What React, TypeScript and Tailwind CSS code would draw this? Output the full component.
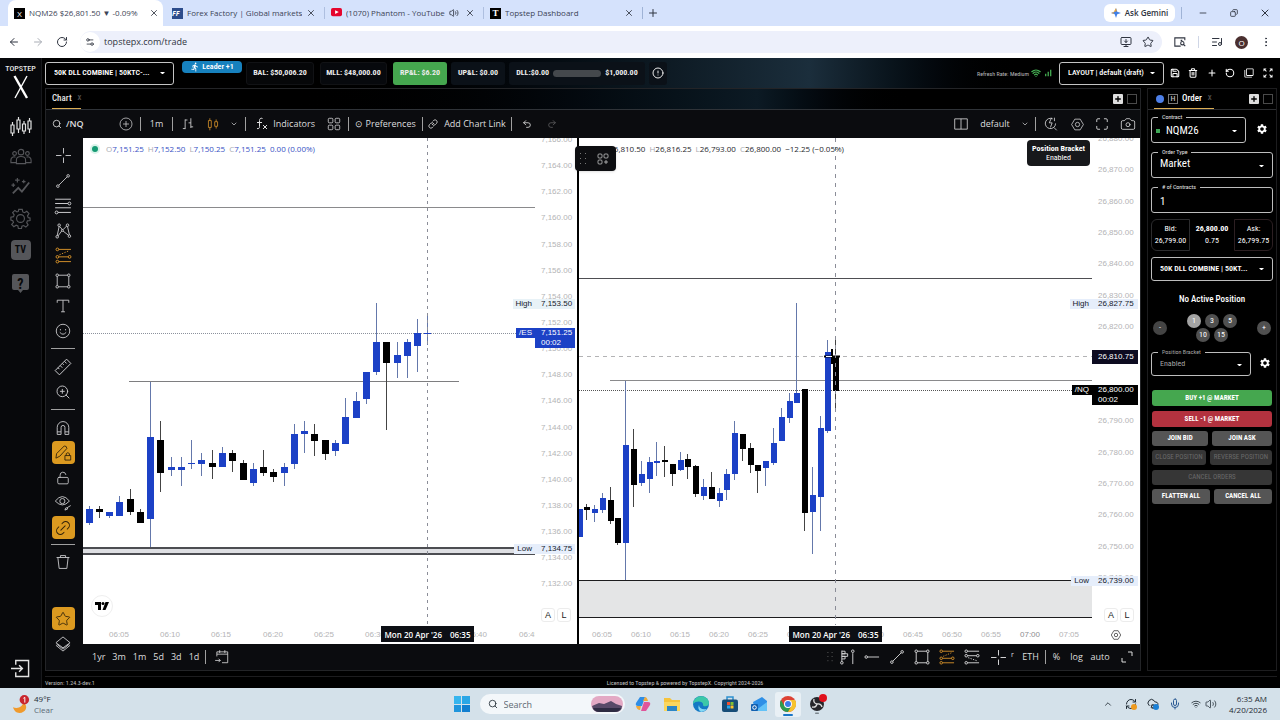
import React, { useState } from 'react';
import {
  ArrowLeft, ArrowRight, RotateCw, X, Plus, Minus, Copy, Volume2, Star, Search, ChevronDown, ChevronUp,
  Maximize, Camera, Undo2, Redo2, ZoomIn, LockOpen, Link2, Link,
  Settings2, MoreVertical, ListMusic, MonitorDown, Wifi, Save, RotateCcw, Mic,
  RefreshCw, CloudCog, CircleAlert, Trash2,
} from 'lucide-react';
import { MdSettings, MdZoomOutMap, MdOutlineFilterNone, MdDirectionsRun, MdSignalCellularAlt } from 'react-icons/md';

type IconProps = { className?: string };

// x step is constant, so a candle only holds wick top, body top, body bottom, wick bottom and direction
type Candle = [number, number, number, number, 0 | 1];

const esCandles: Candle[] = [
  [368, 371, 385, 387, 1], [368, 371, 374, 380, 0], [374, 374, 378, 380, 1], [358, 364, 378, 378, 1],
  [351, 361, 374, 377, 0], [371, 374, 385, 385, 0], [244, 299, 381, 409, 1], [283, 302, 335, 354, 0],
  [319, 329, 332, 338, 1], [319, 329, 332, 348, 1], [302, 325, 326, 331, 1], [315, 322, 326, 338, 1],
  [312, 325, 329, 341, 0], [309, 315, 329, 329, 1], [312, 315, 323, 334, 0], [322, 325, 342, 342, 0],
  [325, 331, 345, 348, 1], [312, 329, 335, 338, 0], [331, 334, 339, 344, 0], [325, 329, 335, 348, 1],
  [286, 296, 326, 331, 1], [283, 293, 296, 315, 1], [286, 296, 303, 318, 0], [302, 302, 316, 322, 0],
  [302, 305, 313, 318, 1], [260, 279, 306, 306, 1], [254, 263, 280, 280, 1], [234, 234, 261, 266, 1],
  [165, 204, 234, 237, 1], [204, 204, 225, 292, 0], [204, 217, 225, 240, 1], [201, 204, 218, 240, 1],
  [181, 195, 208, 234, 1], [178, 195, 196, 207, 1],
];

const nqCandles: Candle[] = [
  [371, 371, 399, 399, 1], [366, 369, 372, 382, 0], [367, 371, 375, 384, 1], [355, 360, 372, 375, 1],
  [349, 362, 383, 386, 0], [380, 380, 405, 407, 0], [243, 307, 405, 442, 1], [291, 311, 347, 369, 0],
  [323, 336, 345, 348, 1], [319, 324, 341, 355, 1], [304, 323, 325, 338, 1], [308, 322, 324, 339, 0],
  [326, 326, 336, 348, 0], [314, 322, 332, 333, 1], [316, 321, 329, 341, 0], [327, 328, 356, 359, 0],
  [341, 349, 358, 362, 1], [334, 349, 361, 361, 0], [350, 355, 363, 369, 1], [331, 336, 352, 362, 1],
  [283, 295, 336, 342, 1], [296, 296, 311, 323, 0], [305, 310, 327, 335, 0], [327, 327, 333, 355, 0],
  [323, 323, 330, 348, 1], [290, 305, 325, 327, 1], [270, 279, 303, 303, 1], [255, 263, 280, 285, 1],
  [165, 255, 265, 265, 1], [251, 251, 375, 393, 0], [329, 357, 374, 416, 1], [278, 290, 359, 393, 1],
  [202, 214, 293, 295, 1], [202, 218, 253, 272, 0],
];

const fmt = (n: number) => n.toLocaleString('en-US', { minimumFractionDigits: 2 });

const Candles = ({ data, x0, step, width }: { data: Candle[]; x0: number; step: number; width: number }) => (
  <>
    {data.map(([hi, top, bottom, lo, up], i) => {
      const x = Math.round(x0 + i * step);
      return (
        <g key={i} shapeRendering="crispEdges">
          <line x1={x + 0.5} x2={x + 0.5} y1={hi} y2={lo} stroke={up ? '#6478ab' : '#444'} />
          <rect x={x + 0.5 - width / 2} y={top} width={width} height={bottom - top} fill={up ? '#1c41c6' : '#000'} />
        </g>
      );
    })}
  </>
);

const Svg = ({ className = 'size-5', children }: { className?: string; children: React.ReactNode }) => (
  <svg viewBox="0 0 28 28" fill="none" stroke="currentColor" strokeWidth="1.4" className={className}>{children}</svg>
);

const TrendIcon = ({ className }: IconProps) => (
  <Svg className={className}><path d="M7.5 20.5 20.5 7.5" /><circle cx="6" cy="22" r="2" /><circle cx="22" cy="6" r="2" /></Svg>
);
const RectIcon = ({ className }: IconProps) => (
  <Svg className={className}>
    <path d="M7 5h14M7 23h14M5 7v14M23 7v14" />
    <circle cx="5" cy="5" r="2" /><circle cx="23" cy="5" r="2" /><circle cx="5" cy="23" r="2" /><circle cx="23" cy="23" r="2" />
  </Svg>
);
const CrossIcon = ({ className }: IconProps) => (
  <Svg className={className}><path d="M14 3v8M14 17v8M3 14h8M17 14h8" /></Svg>
);
const FibIcon = ({ className }: IconProps) => (
  <Svg className={className}>
    <path d="M3 4.500h22M3 10.500h18M3 16.500h22M7 23h18" /><circle cx="23" cy="10.500" r="2" /><circle cx="5" cy="23" r="2" />
  </Svg>
);
const PositionIcon = ({ className }: IconProps) => (
  <Svg className={className}>
    <path d="M7 5h18M7 16h14M7 23h18" /><circle cx="5" cy="5" r="2" /><circle cx="5" cy="16" r="2" /><circle cx="5" cy="23" r="2" />
    <circle cx="23" cy="16" r="2" /><path d="m8 13 14-6" strokeDasharray="2 2" />
  </Svg>
);
const ShortPositionIcon = ({ className }: IconProps) => (
  <Svg className={className}>
    <path d="M7 5h18M7 12h14M7 23h18" /><circle cx="5" cy="5" r="2" /><circle cx="5" cy="12" r="2" /><circle cx="5" cy="23" r="2" />
    <circle cx="23" cy="12" r="2" /><path d="m8 15 14 5" strokeDasharray="2 2" />
  </Svg>
);
const PatternIcon = ({ className }: IconProps) => (
  <Svg className={className}>
    <path d="M5 21 8 7M9 7l4 5M14 12l6-6M21 7l3 13M14 14l9 7M12 14l-6 8" /><circle cx="5" cy="23" r="2" /><circle cx="8" cy="5" r="2" />
    <circle cx="21" cy="5" r="2" /><circle cx="24" cy="22" r="2" /><circle cx="13" cy="13" r="1.500" />
  </Svg>
);
const HLineIcon = ({ className }: IconProps) => (
  <Svg className={className}><circle cx="5" cy="14" r="2" /><path d="M7 14h18" /></Svg>
);
const ProfileIcon = ({ className }: IconProps) => (
  <Svg className={className}>
    <path d="M6 4v17M6 5h5v4H6M6 9h9v4H6M6 13h5v4H6M23 8v17" /><circle cx="6" cy="23" r="2" /><circle cx="23" cy="5" r="2" />
  </Svg>
);
const CandleIcon = ({ className }: IconProps) => (
  <Svg className={className}><path d="M6 8h5v12H6zM8.500 4v4M8.500 20v5M17 10h5v8h-5zM19.500 6v4M19.500 18v4" /></Svg>
);
const BarsIcon = ({ className }: IconProps) => (
  <Svg className={className}><path d="M9 6v17M5 22h4M9 7h4M19 4v17M15 12h4M19 19h4" /></Svg>
);
const GridIcon = ({ className, plus }: IconProps & { plus?: boolean }) => (
  <Svg className={className}>
    <rect x="4" y="4" width="8" height="8" rx="2" /><rect x="16" y="4" width="8" height="8" rx="2" /><rect x="4" y="16" width="8" height="8" rx="2" />
    {plus ? <path d="M20 16v8M16 20h8" /> : <rect x="16" y="16" width="8" height="8" rx="2" />}
  </Svg>
);
const DotsIcon = ({ className }: IconProps) => (
  <svg viewBox="0 0 8 12" fill="currentColor" className={className}>
    {[1, 6, 11].map((y) => <g key={y}><rect x="1" y={y - 1} width="1" height="1" /><rect x="6" y={y - 1} width="1" height="1" /></g>)}
  </svg>
);
const HexIcon = ({ className }: IconProps) => (
  <Svg className={className}><path d="M9 4h10l6 10-6 10H9L3 14z" /><circle cx="14" cy="14" r="4" /></Svg>
);
const Sep = () => <span className="h-3.5 w-px shrink-0 bg-[#a0a0a0]" />;

const Tab = ({ icon, title, active, sound, last }: { icon: React.ReactNode; title: string; active?: boolean; sound?: boolean; last?: boolean }) => (
  <div className={`flex shrink-0 items-center ${active ? 'mr-[3px] w-[155px] rounded-t-lg bg-white' : 'w-[159px]'}`}>
    <span className="ml-1.5 flex size-[11px] shrink-0 items-center justify-center">{icon}</span>
    <span className="ml-1 flex-1 overflow-hidden whitespace-nowrap text-[8px] text-[#3c4356]">{title}</span>
    {sound && <Volume2 className="mr-0.5 size-2.5 shrink-0" />}
    <button aria-label="Close tab"><X className="mx-1 size-2.5" /></button>
    {!active && <span className={`ml-1 h-3 w-px ${last ? 'bg-[#9fb3d6]' : 'bg-[#aebfe0]'}`} />}
  </div>
);

const BrowserChrome = () => (
  <header className="font-['Open_Sans',sans-serif] text-[#2f3440]">
    <div className="flex h-[26px] bg-[#d5e2fc] pl-2">
      <Tab active title="NQM26 $26,801.50 ▼ -0.09%" icon={<span className="size-[11px] bg-black text-center text-[8px] leading-[11px] text-white">X</span>} />
      <Tab title="Forex Factory | Global markets f" icon={<span className="size-[11px] bg-[#2c4c8c] text-[7px] leading-[11px] font-bold text-white italic">FF</span>} />
      <Tab sound title="(1070) Phantom - YouTube" icon={<svg viewBox="0 0 12 10" className="w-[11px]"><rect width="12" height="9" rx="2" fill="#e5052d" /><path d="M4.500 2.500v4l4-2z" fill="#fff" /></svg>} />
      <Tab last title="Topstep Dashboard" icon={<span className="size-[11px] bg-black text-center font-['Liberation_Serif',serif] text-[9px] leading-[11px] font-bold text-white">T</span>} />
      <button aria-label="New tab" className="ml-1"><Plus className="size-3" /></button>
      <div className="ml-auto flex items-center">
        <button className="flex h-[18px] w-[71px] items-center justify-center gap-1 rounded-md bg-white text-[8px] font-semibold whitespace-nowrap">
          <svg viewBox="0 0 12 12" className="size-2.5"><path d="M6 0 7.500 4.500 12 6 7.500 7.500 6 12 4.500 7.500 0 6l4.500-1.500z" fill="#3f7fe8" /><path d="M6 0 7 4 4.500 4.500 0 6l4 1-1-2z" fill="#e7a23b" /></svg>
          Ask Gemini
        </button>
        <span className="mx-1.5 h-3 w-px bg-[#9fb3d6]" />
        <button aria-label="Minimize" className="flex w-[30px] justify-center"><Minus className="size-2.5" /></button>
        <button aria-label="Restore" className="flex w-8 justify-center"><Copy className="size-2 -scale-x-100" strokeWidth={2.5} /></button>
        <button aria-label="Close window" className="flex w-[30px] justify-center"><X className="size-3" /></button>
      </div>
    </div>
    <div className="flex h-8 items-center bg-white pr-2">
      <button aria-label="Back" className="flex w-7 justify-center"><ArrowLeft className="size-3" /></button>
      <button aria-label="Forward" className="flex w-5 justify-center text-[#a9adb5]"><ArrowRight className="size-3" /></button>
      <button aria-label="Reload" className="flex w-7 justify-center"><RotateCw className="size-3" /></button>
      <div className="ml-1 flex h-[22px] flex-1 items-center rounded-full bg-[#edf0fb] pr-2">
        <span className="flex size-5 items-center justify-center rounded-full bg-white"><Settings2 className="size-2.5" /></span>
        <input aria-label="Address" defaultValue="topstepx.com/trade" className="ml-1 flex-1 bg-transparent text-[9px] outline-none" />
        <MonitorDown className="mr-2.5 size-3" />
        <Star className="size-3" />
      </div>
      <button aria-label="Side panel" className="flex w-9 justify-center">
        <svg viewBox="0 0 14 12" fill="none" stroke="currentColor" strokeWidth="1.300" className="h-2.5"><path d="M8 11H1V1h12v3M8 4h2" /><circle cx="10" cy="7.500" r="2" /><path d="m11.500 9 2 2" /></svg>
      </button>
      <span className="h-3 w-px bg-[#cfd6e6]" />
      <button aria-label="Media" className="flex w-9 justify-center"><ListMusic className="size-3" /></button>
      <span className="size-[13px] rounded-full bg-[#4a2f2f] text-center text-[8px] leading-[13px] text-white">O</span>
      <button aria-label="Menu" className="ml-3"><MoreVertical className="size-3" /></button>
    </div>
  </header>
);

const Sidebar = () => (
  <nav className="flex w-[42px] shrink-0 flex-col items-center border-r border-[#18191c] bg-[#07080b] text-[#55565a]">
    <div className="mt-1.5 text-[8px] leading-[10px] font-medium text-[#e6e6e6]">TOPSTEP</div>
    <svg viewBox="0 0 16 24" className="mt-px mb-2.5 h-6 w-4" fill="none" stroke="#fff"><path d="M1.500 1 14 23" strokeWidth="2.400" /><path d="M14 1 2 23" strokeWidth="1.400" /></svg>
    <button aria-label="Trade" className="h-[33px] text-[#e2e2e2]">
      <svg viewBox="0 0 22 20" fill="none" stroke="currentColor" className="w-[22px]" strokeWidth="1.200">
        <path d="M1 9h3v8H1zM2.500 6v3M2.500 17v3M7 4h3v9H7zM8.500 1v3M8.500 13v4M12.500 8h3v7h-3zM14 5v3M14 15v3M18 5h3v8h-3zM19.500 2v3M19.500 13v4" />
      </svg>
    </button>
    <button aria-label="Leaders" className="h-[29px]">
      <svg viewBox="0 0 24 18" fill="none" stroke="currentColor" className="w-[22px]" strokeWidth="1.200">
        <circle cx="12" cy="4.500" r="3" /><circle cx="5" cy="6" r="2" /><circle cx="19" cy="6" r="2" />
        <path d="M7 17v-4c0-5 10-5 10 0v4zM7 16H1v-3c0-3 3-4 5-3M17 16h6v-3c0-3-3-4-5-3" />
      </svg>
    </button>
    <button aria-label="Insights" className="h-[31px]">
      <svg viewBox="0 0 22 20" className="w-5" fill="none" stroke="currentColor" strokeWidth="2">
        <path d="m2 18 6-6 4 4 8-10" /><path d="M7 1v5M4.500 3.500h5M14 3v4M12 5h4M2.500 7v4M.500 9h4" strokeWidth="1.300" />
      </svg>
    </button>
    <button aria-label="Settings" className="h-[33px]">
      <svg viewBox="0 0 24 24" fill="none" stroke="currentColor" className="w-[21px]" strokeWidth="1.300">
        <circle cx="12" cy="12" r="4.500" />
        <path d="M10 1.500h4l.600 3 2 .900 2.600-1.700 2.500 2.600L20 9l.900 2 2 .300v3l-3 .400-.800 2 1.600 2.600-2.600 2.500-2.500-1.700-2 .800-.500 2.600h-3.500l-.600-3-2-.800-2.600 1.700-2.500-2.600L4 16.500l-.800-2-2.200-.600V10.500l3-.600.800-2L3 5.300l2.600-2.500L8 4.500l1.500-.600z" />
      </svg>
    </button>
    <button aria-label="TradingView" className="mt-[5px] mb-3.5 size-5 rounded bg-current"><span className="block text-[10px] leading-5 font-bold text-[#08090b]">TV</span></button>
    <button aria-label="Help" className="relative h-[19px] w-[17px]">
      <svg viewBox="0 0 17 19" className="absolute inset-0" fill="currentColor"><path d="M2 0h13q2 0 2 2v12q0 2-2 2h-4l-2.500 3L6 16H2q-2 0-2-2V2q0-2 2-2z" /></svg>
      <span className="relative block text-[14px] leading-4 font-bold text-[#08090b]">?</span>
    </button>
    <button aria-label="Log out" className="mt-auto mb-2.5 text-[#e2e2e2]">
      <svg viewBox="0 0 20 20" className="size-[19px]" fill="none" stroke="currentColor" strokeWidth="1.500"><path d="M5 6V1.500h13.500v17H5V14M0 10h12M8.500 6.500 12 10l-3.500 3.500" /></svg>
    </button>
  </nav>
);

const Select = ({ id, label, value, className }: { id: string; label: string; value: string; className: string }) => (
  <div className="relative w-full">
    <select id={id} aria-label={label} className={`block w-full appearance-none truncate bg-transparent outline-none ${className}`}>
      <option>{value}</option>
    </select>
    <span className="pointer-events-none absolute inset-y-0 right-2 flex items-center">
      <svg viewBox="0 0 6 3" className="w-[5px]" fill="#fff"><path d="M0 0h6L3 3z" /></svg>
    </span>
  </div>
);

const Stat = ({ children, className }: { children: React.ReactNode; className: string }) => (
  <div className={`flex h-[23px] items-center justify-center rounded-[3px] text-[8px] font-bold whitespace-nowrap text-[#ececec] ${className}`}>{children}</div>
);

const TopBar = () => (
  <div className="flex h-[30px] items-center bg-linear-to-r from-black from-20% via-[#1b2e3c] via-62% to-black to-80% pl-[3px]">
    <div className="w-[129px] rounded-[3px] border border-[#c4c4c4] bg-black">
      <Select id="account-top" label="Account" value="50K DLL COMBINE | 50KTC-..." className="h-[21px] pl-2 text-[8px] font-semibold text-white" />
    </div>
    <div className="mt-[3px] ml-2 flex h-3 w-[60px] items-center justify-center gap-0.5 self-start rounded-[4px] bg-[#1781be] text-[8px] font-semibold text-white"><MdDirectionsRun className="size-2.5" />Leader +1</div>
    <Stat className="ml-1 w-[68px] border border-[#111215] bg-[#060709]">BAL: $50,006.20</Stat>
    <Stat className="ml-1.5 w-[67px] border border-[#111215] bg-[#07090d]">MLL: $48,000.00</Stat>
    <Stat className="ml-1.5 w-[54px] bg-[#45a74f]">RP&amp;L: $6.20</Stat>
    <Stat className="ml-1 w-[54px] bg-[#0b1118]">UP&amp;L: $0.00</Stat>
    <Stat className="ml-1 w-[136px] gap-1 bg-[#0b1118]">DLL:$0.00<span className="h-[7px] w-12 rounded-full bg-[#44484c]" />$1,000.00</Stat>
    <Stat className="ml-1 w-[18px] bg-[#0b1118]"><CircleAlert className="size-3" /></Stat>
    <div className="ml-auto flex items-center pr-1.5 text-white">
      <span className="text-[6px] text-[#bbb]">Refresh Rate: Medium</span>
      <Wifi className="ml-0.5 size-2.5 text-[#47b455]" strokeWidth={3} />
      <MdSignalCellularAlt className="ml-0.5 size-2.5 text-[#47b455]" />
      <div className="ml-1.5 w-[105px] rounded-[3px] border border-[#c4c4c4]">
        <Select id="layout" label="Layout" value="LAYOUT | default (draft)" className="h-[21px] pl-2 text-[8px] font-medium" />
      </div>
      <div className="flex w-[110px] justify-between pl-1.5">
        <button aria-label="Save"><Save className="size-2.5" strokeWidth={2.5} /></button>
        <button aria-label="Delete"><Trash2 className="size-2.5" strokeWidth={2.5} /></button>
        <button aria-label="Add"><Plus className="size-2.5" strokeWidth={2.5} /></button>
        <button aria-label="Reset"><RotateCcw className="size-2.5" strokeWidth={2.5} /></button>
        <button aria-label="Windows"><MdOutlineFilterNone className="size-2.5" /></button>
        <button aria-label="Expand"><MdZoomOutMap className="size-3" /></button>
      </div>
    </div>
  </div>
);

const PanelButtons = () => (
  <div className="ml-auto flex items-center gap-1 pr-[3px]">
    <button aria-label="Add tab" className="flex size-2.5 items-center justify-center rounded-[1px] bg-[#dedede] text-black"><Plus className="size-2" strokeWidth={4} /></button>
    <button aria-label="Maximize panel" className="size-2.5 border border-[#4a4a4a]" />
  </div>
);

const ChartToolbar = () => (
  <div className="flex h-7 items-center bg-[#0b0c0f] font-['Open_Sans',sans-serif] text-[9px] font-medium text-[#dededf]">
    <button className="flex w-[66px] items-center gap-1 pl-1.5 font-semibold"><Search className="size-2.5" />/NQ</button>
    <button aria-label="Compare" className="flex w-7 justify-center"><Svg className="size-[14px]"><circle cx="14" cy="14" r="12" /><path d="M14 8v12M8 14h12" /></Svg></button>
    <Sep />
    <button className="w-[31px]">1m</button>
    <Sep />
    <button aria-label="Bars" className="flex w-[30px] justify-center"><BarsIcon className="size-4" /></button>
    <button aria-label="Candles" className="flex w-5 justify-center text-[#d8932a]"><CandleIcon className="size-4" /></button>
    <button aria-label="Chart types" className="flex w-[22px] justify-center"><ChevronDown className="size-2" /></button>
    <Sep />
    <button className="flex w-[69px] items-center justify-end gap-1">
      <Svg className="size-3.5"><path d="M15 3c-4-2-6 1-6 4v12c0 4-2 5-5 4M4 11h10M16 16l8 8M24 16l-8 8" strokeWidth="2" /></Svg>Indicators
    </button>
    <button aria-label="Templates" className="flex w-[33px] justify-center pl-1"><GridIcon className="size-4" /></button>
    <Sep />
    <button className="w-[73px] whitespace-nowrap">⊙ Preferences</button>
    <Sep />
    <button className="flex w-[88px] items-center justify-center gap-1.5 whitespace-nowrap"><Link className="size-2.5" />Add Chart Link</button>
    <Sep />
    <button aria-label="Undo" className="flex w-[29px] justify-center"><Undo2 className="size-2.5" /></button>
    <button aria-label="Redo" className="flex w-[22px] justify-center text-[#5a5a5d]"><Redo2 className="size-2.5" /></button>
    <div className="ml-auto flex items-center">
      <button aria-label="Split layout" className="flex w-7 justify-center"><Svg className="size-4"><path d="M3 5h22v18H3zM14 5v18" /></Svg></button>
      <button className="w-10">default</button>
      <button aria-label="Layouts" className="flex w-5 justify-center"><ChevronDown className="size-2" /></button>
      <Sep />
      <button aria-label="Replay" className="flex w-[29px] justify-center"><Svg className="size-4"><path d="M17 5A9 9 0 1 0 22 13M19 20l5 5M15 3l-4 9h5l-3 8M20 3v6" /></Svg></button>
      <button aria-label="Settings" className="flex w-6 justify-center"><HexIcon className="size-[15px]" /></button>
      <button aria-label="Fullscreen" className="flex w-[26px] justify-center"><Maximize className="size-3.5" strokeWidth={1.5} /></button>
      <button aria-label="Snapshot" className="flex w-[25px] justify-center"><Camera className="size-4" strokeWidth={1.2} /></button>
    </div>
  </div>
);

const Tool = ({ label, children, on }: { label: string; children: React.ReactNode; on?: boolean }) => (
  <button aria-label={label} className={`my-px flex h-[23px] w-[23px] items-center justify-center rounded-[4px] ${on ? 'bg-[#dc9a20] text-[#33240a]' : ''}`}>{children}</button>
);

const DrawingTools = () => (
  <div className="flex w-[37px] shrink-0 flex-col items-center bg-[#0b0c0f] pt-[5px] pr-[3px] pb-3.5 text-[#c9c9cc]">
    <Tool label="Cross"><CrossIcon className="size-[19px]" /></Tool>
    <Tool label="Trend line"><TrendIcon className="size-[18px]" /></Tool>
    <Tool label="Fibonacci"><FibIcon className="size-5" /></Tool>
    <Tool label="Patterns"><PatternIcon className="size-[18px]" /></Tool>
    <Tool label="Positions"><span className="text-[#d8932a]"><PositionIcon className="size-[19px]" /></span></Tool>
    <Tool label="Shapes"><RectIcon className="size-[18px]" /></Tool>
    <Tool label="Text"><Svg className="size-[18px]"><path d="M5 9V5h18v4M14 5v18M11 23h6" /></Svg></Tool>
    <Tool label="Emoji">
      <Svg className="size-[18px]"><circle cx="14" cy="14" r="10.500" /><path d="M10 11v2M18 11v2M9 16q5 6 10 0" /></Svg>
    </Tool>
    <span className="my-[5px] h-px w-6 shrink-0 bg-[#a0a0a0]" />
    <Tool label="Measure">
      <Svg className="size-5"><path d="M3 19 19 3l6 6L9 25zM7 15l2 2M10 12l3 3M13 9l2 2M16 6l3 3" /></Svg>
    </Tool>
    <Tool label="Zoom in"><ZoomIn className="size-4" strokeWidth={1.4} /></Tool>
    <span className="my-[5px] h-px w-6 shrink-0 bg-[#a0a0a0]" />
    <Tool label="Magnet">
      <Svg className="size-[18px]"><path d="M5 24V13a9 9 0 0 1 18 0v11h-6V13a3 3 0 0 0-6 0v11zM5 20h6M17 20h6" /></Svg>
    </Tool>
    <Tool label="Stay in drawing mode" on>
      <Svg className="size-[18px]"><path d="m3 22 1-7L16 3q4 0 4 4L9 19zM17 18h9v7h-9zM19 18v-3q2.500-3 5 0v3" /></Svg>
    </Tool>
    <Tool label="Lock"><LockOpen className="size-3.5" strokeWidth={1.5} /></Tool>
    <Tool label="Hide">
      <Svg className="size-[18px]"><path d="M2 11q11-14 22 0-11 12-22 0z" /><circle cx="13" cy="11" r="4" /><path d="M17 25q0-4 4-4 2 3-4 4zM21 21l5-3" /></Svg>
    </Tool>
    <Tool label="Sync drawings" on><Link2 className="size-[18px] -rotate-45" strokeWidth={1.3} /></Tool>
    <span className="my-1 h-px w-6 shrink-0 bg-[#a0a0a0]" />
    <Tool label="Remove"><Svg className="size-[18px]"><path d="M4 7h20M10 7V4h8v3M6 7l2 17h12l2-17" /></Svg></Tool>
    <div className="mt-auto flex flex-col">
      <Tool label="Favorites" on><Star className="size-4" strokeWidth={1.3} /></Tool>
      <Tool label="Object tree">
        <Svg className="size-[18px]"><path d="M14 3 25 12 14 20 3 12zM3 16l11 9 11-9M4 14l10 8 10-8" /></Svg>
      </Tool>
    </div>
  </div>
);

type Tag = { y: number; name?: string; value: string; time?: string; className: string };

// a label that sits right under a tag is left out
const Axis = ({ prices, first, step, tags, gear, className }: { prices: number[]; first: number; step: number; tags: Tag[]; gear?: boolean; className: string }) => (
  <div className={`relative shrink-0 text-[8px] leading-[10px] ${className}`}>
    {prices.map((p, i) => {
      const y = Math.round(first + i * step);
      if (tags.some((t) => Math.abs(t.y - y) < 3)) return null;
      return <span key={p} className="absolute left-1.5 text-[#b4b4b6]" style={{ top: y - 5 }}>{fmt(p)}</span>;
    })}
    {tags.map((t) => (
      <div key={t.value} className="absolute right-0.5 left-0" style={{ top: t.y - 5 }}>
        {t.name && <span className={`absolute right-full px-[3px] ${t.className}`}>{t.name}</span>}
        <div className={`pl-1.5 ${t.className}`}>{t.value}{t.time && <div>{t.time}</div>}</div>
      </div>
    ))}
    <div className="absolute right-1.5 bottom-[22px] flex gap-0.5 text-[9px] font-medium text-[#222]">
      <button className="size-3.5 rounded-[3px] border border-[#ececec] bg-white">A</button>
      <button className="size-3.5 rounded-[3px] border border-[#ececec] bg-white">L</button>
    </div>
    {gear && <span className="absolute right-[18px] bottom-[3px] text-black"><HexIcon className="size-3" /></span>}
  </div>
);

const TimeAxis = ({ from, count, x0, step, cursor }: { from: number; count: number; x0: number; step: number; cursor: number }) => {
  const labels = Array.from({ length: count }, (_, i) => from + i * 5);
  const text = (m: number) => `${String(Math.floor(m / 60)).padStart(2, '0')}:${String(m % 60).padStart(2, '0')}`;
  return (
    <div className="absolute inset-x-0 bottom-0 h-[19px] overflow-hidden text-[8px] leading-[19px] text-[#b4b4b6]">
      {labels.map((m, i) => (
        <span key={m} className={`absolute w-10 text-center ${m === 420 ? 'text-[#8c8c8f]' : ''}`} style={{ left: Math.round(x0 + i * step) - 20 }}>{text(m)}</span>
      ))}
      <span className="absolute top-px flex h-4 w-[93px] items-center justify-center gap-2 bg-[#0d0f15] font-['Open_Sans',sans-serif] font-semibold whitespace-nowrap text-white" style={{ left: cursor - 46 }}>
        <span>Mon 20 Apr '26</span><span>06:35</span>
      </span>
    </div>
  );
};

const Ohlc = ({ values, change, className }: { values: [string, string][]; change: string; className: string }) => (
  <div className={`absolute top-1 flex gap-1 font-['Open_Sans',sans-serif] text-[8px] leading-[14px] font-medium whitespace-nowrap ${className}`}>
    {values.map(([k, v]) => <span key={k}><span className="text-[#a9abb2]">{k}</span>{v}</span>)}
    <span>{change}</span>
  </div>
);

const range = (start: number, n: number, by: number) => Array.from({ length: n }, (_, i) => start - i * by);

const Charts = () => (
  <div className="relative flex min-h-[500px] flex-1 overflow-hidden bg-white font-['Liberation_Sans',Arial,sans-serif]">
    <section className="relative flex w-[496px] shrink-0 overflow-hidden border-r-2 border-black">
      <div className="relative flex-1 overflow-hidden">
        <svg className="absolute inset-0 h-full w-full">
          <g shapeRendering="crispEdges">
            <line x1="0" x2="100%" y1="69" y2="69" stroke="#8a8a8c" strokeWidth="1" />
            <line x1="46" x2="376" y1="243.500" y2="243.500" stroke="#7e7e80" />
            <line x1="0" x2="100%" y1="195.500" y2="195.500" stroke="#8c919c" strokeDasharray="1 1" />
            <rect x="0" y="411" width="100%" height="4" fill="#dedfe3" />
            <rect x="0" y="409" width="100%" height="2" fill="#4c4d52" />
            <rect x="0" y="415" width="100%" height="2" fill="#4c4d52" />
          </g>
          <Candles data={esCandles} x0={5.5} step={10.27} width={7} />
          <line x1="344.500" x2="344.500" y1="0" y2="487" stroke="#8b8d98" strokeDasharray="3 4" />
        </svg>
        <span className="absolute top-1.5 left-[7px] size-2.5 rounded-full bg-[#d9f3ea] p-[2px]"><span className="block size-1.5 rounded-full bg-[#159a73]" /></span>
        <Ohlc className="left-[23px] text-[#3752c4]" values={[['O', '7,151.25'], ['H', '7,152.50'], ['L', '7,150.25'], ['C', '7,151.25']]} change="0.00 (0.00%)" />
        <span className="absolute bottom-[27px] left-2 flex size-[22px] items-center justify-center rounded-full border border-[#efefef] bg-white">
          <svg viewBox="0 0 14 8" className="w-3.5" fill="#000"><path d="M0 0h6v8H3V3H0z" /><circle cx="8" cy="1.500" r="1.500" /><path d="M10.500 0H14l-3.500 8H7.500z" /></svg>
        </span>
        <TimeAxis from={365} count={9} x0={36} step={51.2} cursor={344} />
      </div>
      <Axis
        className="w-[42px]" prices={range(7166, 18, 2)} first={2} step={26.14}
        tags={[
          { y: 166, name: 'High', value: '7,153.50', className: 'bg-[#e8f2f7] text-[#15202b]' },
          { y: 195, name: '/ES', value: '7,151.25', time: '00:02', className: 'bg-[#1c41c6] text-white' },
          { y: 411, name: 'Low', value: '7,134.75', className: 'bg-[#e6eefb] text-[#15202b]' },
        ]}
      />
    </section>
    <section className="relative flex flex-1 overflow-hidden">
      <div className="relative flex-1 overflow-hidden">
        <svg className="absolute inset-0 h-full w-full">
          <g shapeRendering="crispEdges">
            <line x1="0" x2="100%" y1="140.500" y2="140.500" stroke="#4e4e52" />
            <line x1="0" x2="100%" y1="218.500" y2="218.500" stroke="#b3b3b5" strokeDasharray="4 4" />
            <line x1="31" x2="100%" y1="242.500" y2="242.500" stroke="#8a8a8c" />
            <line x1="0" x2="100%" y1="252.500" y2="252.500" stroke="#555" strokeDasharray="1 1" />
            <rect x="0" y="443" width="100%" height="36" fill="#e4e5e6" />
            <line x1="0" x2="100%" y1="442.500" y2="442.500" stroke="#1d1d1f" />
            <line x1="0" x2="100%" y1="479.500" y2="479.500" stroke="#1d1d1f" />
          </g>
          <Candles data={nqCandles} x0={-0.5} step={7.78} width={6} />
          <path d="M245 218.500h16M253 211v15" stroke="#000" strokeWidth="2" />
          <path d="M247 218.500h6" stroke="#fff" />
          <line x1="256.500" x2="256.500" y1="0" y2="487" stroke="#8b8d98" strokeDasharray="4 5" />
        </svg>
        <Ohlc className="left-6 text-[#26272c]" values={[['O', '26,810.50'], ['H', '26,816.25'], ['L', '26,793.00'], ['C', '26,800.00']]} change="−12.25 (−0.05%)" />
        <div className="absolute top-0.5 right-0.5 w-[63px] rounded-[4px] bg-[#17181b] py-1 text-center font-['Roboto_Condensed','Liberation_Sans_Narrow',sans-serif] text-[8px] leading-[9px] text-white">
          <div className="font-bold">Position Bracket</div>Enabled
        </div>
        <TimeAxis from={365} count={13} x0={23} step={38.9} cursor={256} />
      </div>
      <Axis
        gear className="w-12" prices={range(26880, 15, 10)} first={1} step={31.37}
        tags={[
          { y: 166, name: 'High', value: '26,827.75', className: 'bg-[#e6eefb] text-[#15202b]' },
          { y: 219, value: '26,810.75', className: 'bg-[#0d0b20] text-white py-0.5 -mt-0.5' },
          { y: 252, name: '/NQ', value: '26,800.00', time: '00:02', className: 'bg-black text-white' },
          { y: 443, name: 'Low', value: '26,739.00', className: 'bg-[#e6eefb] text-[#15202b]' },
        ]}
      />
    </section>
    <div className="absolute top-2 left-[492px] flex h-[25px] w-[41px] items-center justify-between rounded-[4px] bg-[#0d0e11] pr-1.5 pl-1 text-[#d8d8d8] shadow">
      <DotsIcon className="h-3 w-2 text-[#777]" /><GridIcon plus className="size-3.5" />
    </div>
  </div>
);

const BottomBar = () => (
  <div className="flex h-[26px] items-center bg-[#0b0c0f] font-['Open_Sans',sans-serif] text-[9px] font-medium text-[#dededf]">
    <div className="flex items-center gap-[7px] pr-1.5 pl-[9px]">
      {['1yr', '3m', '1m', '5d', '3d', '1d'].map((r) => <button key={r}>{r}</button>)}
    </div>
    <Sep />
    <button aria-label="Go to date" className="ml-2"><Svg className="size-4"><path d="M5 13V5h19v19H14M5 9h19M10 2v5M19 2v5M2 20h9M8 17l3 3-3 3" /></Svg></button>
    <div className="ml-auto flex items-center">
      <DotsIcon className="h-2.5 w-2 text-[#777]" />
      {[ProfileIcon, HLineIcon, TrendIcon, RectIcon].map((Icon, i) => <button key={i} aria-label={`Favorite ${i + 1}`} className="flex w-[25px] justify-center"><Icon className="size-[18px]" /></button>)}
      <button aria-label="Long position" className="flex w-[25px] justify-center text-[#d8932a]"><PositionIcon className="size-[18px]" /></button>
      <button aria-label="Short position" className="flex w-[26px] justify-center"><ShortPositionIcon className="size-[18px]" /></button>
      <button aria-label="Crosshair" className="flex w-[26px] justify-center"><CrossIcon className="size-[19px]" /></button>
      <span className="mb-1 w-[5px] text-[7px]">r</span>
      <button className="w-[29px]">ETH</button>
      <Sep />
      <button className="w-[21px] font-normal">%</button>
      <button className="w-[19px]">log</button>
      <button className="w-7">auto</button>
      <button aria-label="Expand" className="flex w-[26px] justify-center"><Svg className="size-3.5"><path d="M16 4h8v8M4 16v8h8" strokeWidth="2" /></Svg></button>
    </div>
  </div>
);

const Field = ({ id, label, dim, className, children }: { id: string; label: string; dim?: boolean; className?: string; children: React.ReactNode }) => (
  <fieldset className={`min-w-0 rounded-[3px] border border-[#bdbdbd] ${className ?? ''}`}>
    <legend className={`ml-1.5 px-1 text-[6px] leading-[6px] ${dim ? 'text-[#a5a5a5]' : 'text-[#e4e4e4]'}`}><label htmlFor={id} className="block">{label}</label></legend>
    {children}
  </fieldset>
);

const OrderPanel = () => {
  const [size, setSize] = useState(1);
  const actions = 'h-[15px] rounded-[3px] bg-[#555] whitespace-nowrap disabled:bg-[#363636] disabled:text-[#696969] disabled:font-normal';
  return (
    <aside className="flex w-[130px] shrink-0 flex-col border border-[#1d1d1f] bg-black text-white">
      <div className="flex h-[21px] items-center border-b border-[#2c2d30]">
        <div className="ml-1.5 flex h-full items-center gap-1 border-b border-[#dcae55] px-0.5 text-[9px] font-medium">
          <span className="size-2 rounded-full bg-[#4d7fe8]" />
          <span className="size-2.5 border border-[#777] text-center text-[8px] leading-2 text-[#bbb]">H</span>
          Order<button aria-label="Close order tab" className="ml-0.5 text-[7px] text-[#555]">X</button>
        </div>
        <PanelButtons />
      </div>
      <form className="flex flex-col px-[3px] pt-1" onSubmit={(e) => e.preventDefault()}>
        <div className="flex items-center">
          <Field id="contract" label="Contract" className="w-[95px]">
            <div className="flex items-center pl-1">
              <span className="size-1 shrink-0 bg-[#3fa856]" />
              <Select id="contract" label="Contract" value="NQM26" className="h-[22px] pl-1.5 text-[11px]" />
            </div>
          </Field>
          <button type="button" aria-label="Contract settings" className="ml-2.5"><MdSettings className="size-3" /></button>
        </div>
        <Field id="order-type" label="Order Type" className="mt-1.5">
          <Select id="order-type" label="Order Type" value="Market" className="h-[22px] pb-1 pl-2 text-[11px]" />
        </Field>
        <Field id="contracts" label="# of Contracts" className="mt-1.5">
          <input id="contracts" value={size} onChange={(e) => setSize(Number(e.target.value))} className="block h-[22px] w-full bg-transparent pl-2 text-[11px] outline-none" />
        </Field>
        <div className="mt-1.5 flex h-8 text-center text-[8px] leading-3">
          <div className="w-[39px] rounded-l-md border border-[#2c2c2e] pt-[3px]">Bid:<br />26,799.00</div>
          <div className="flex-1 pt-1"><b>26,800.00</b><br />0.75</div>
          <div className="w-[39px] rounded-r-md border border-[#2c1f22] pt-[3px]">Ask:<br />26,799.75</div>
        </div>
        <div className="mt-1.5 rounded-[3px] border border-[#bdbdbd]">
          <Select id="account-order" label="Order account" value="50K DLL COMBINE | 50KT..." className="h-[22px] pr-4 pl-2 text-[8px] font-semibold" />
        </div>
        <div className="mt-[11px] text-center text-[9px] leading-[14px] font-medium">No Active Position</div>
        <div className="mt-2 flex items-center justify-between px-0.5 text-[8px]">
          <button type="button" aria-label="Less" className="size-3.5 rounded-full bg-[#444] leading-none" onClick={() => setSize(size - 1)}>-</button>
          <div className="flex w-[56px] flex-wrap justify-center gap-x-1">
            {[1, 3, 5, 10, 15].map((n) => (
              <button key={n} type="button" className={`size-3.5 rounded-full leading-none ${n === size ? 'bg-[#a3a3a3]' : 'bg-[#505050]'}`} onClick={() => setSize(n)}>{n}</button>
            ))}
          </div>
          <button type="button" aria-label="More" className="size-3.5 rounded-full bg-[#505050] leading-none" onClick={() => setSize(size + 1)}>+</button>
        </div>
        <div className="mt-[7px] flex items-center">
          <Field id="bracket" label="Position Bracket" dim className="w-[100px]">
            <Select id="bracket" label="Position Bracket" value="Enabled" className="h-5 pb-0.5 pl-2 text-[8px] text-[#a5a5a5]" />
          </Field>
          <button type="button" aria-label="Bracket settings" className="ml-2"><MdSettings className="size-3" /></button>
        </div>
        <div className="mt-3.5 flex flex-col gap-[5px] px-px text-[7px] font-bold">
          <button className="h-4 rounded-[3px] bg-[#45a74f]">BUY +1 @ MARKET</button>
          <button className="h-4 rounded-[3px] bg-[#b3323f]">SELL -1 @ MARKET</button>
          <div className="-mt-px flex gap-1"><button className={`w-[56px] ${actions}`}>JOIN BID</button><button className={`flex-1 ${actions}`}>JOIN ASK</button></div>
          <div className="-mt-px flex gap-1"><button disabled className={`w-[54px] ${actions}`}>CLOSE POSITION</button><button disabled className={`flex-1 ${actions}`}>REVERSE POSITION</button></div>
          <button disabled className={actions}>CANCEL ORDERS</button>
          <div className="-mt-px flex gap-1"><button className={`w-[58px] ${actions}`}>FLATTEN ALL</button><button className={`flex-1 ${actions}`}>CANCEL ALL</button></div>
        </div>
      </form>
    </aside>
  );
};

const Taskbar = () => (
  <footer className="grid h-8 grid-cols-[1fr_auto_1fr] items-center bg-[#d4e1ea] font-['Open_Sans',sans-serif] text-[8px] leading-[11px] text-[#1f2a33]">
    <div className="flex items-center gap-[3px] pl-3">
      <svg viewBox="0 0 20 20" className="size-[19px]"><path d="M1 13c6 2 10-1 11-5 6 4 2 11-4 11-4 0-6-3-7-6z" fill="#f09a2c" /><circle cx="13" cy="5" r="5" fill="#c9252d" /><path d="M12 3.500 13.500 2.500V8" stroke="#fff" fill="none" /></svg>
      <div>49°F<div className="text-[#5a6a76]">Clear</div></div>
    </div>
    <div className="flex items-center">
      <button aria-label="Start" className="mr-2.5 grid size-4 grid-cols-2 gap-px"><i className="bg-[#36b5ee]" /><i className="bg-[#2aa6e6]" /><i className="bg-[#1f95dc]" /><i className="bg-[#127fd0]" /></button>
      <label className="flex h-5 w-[145px] items-center gap-1.5 rounded-full bg-[#f3f7fa] pr-0.5 pl-2">
        <Search className="size-2.5" />
        <input placeholder="Search" className="w-0 flex-1 bg-transparent text-[9px] outline-none placeholder:text-[#5f6a72]" />
        <svg viewBox="0 0 32 16" className="h-4 w-8"><rect width="32" height="16" rx="8" fill="#e3a9c4" /><path d="M1 10 8 7l5 1 7-3 5 3 6 2q0 6-7 6H8q-6 0-7-6z" fill="#584a68" /><path d="M2 12h28q-2 4-7 4H9q-5 0-7-4z" fill="#2d2b42" /></svg>
      </label>
      <button aria-label="Copilot" className="ml-2.5"><svg viewBox="0 0 16 16" className="size-4"><path d="M5 1h5L7 10H3q-3 0-2-3z" fill="#2f8de4" /><path d="M11 15H6l3-9h4q3 0 2 3z" fill="#e0559a" /><path d="M10 1q2 0 3 4H8zM1 10h5l-1 4q-3 0-4-4z" fill="#f0a93a" /></svg></button>
      <button aria-label="File Explorer" className="ml-[13px]"><svg viewBox="0 0 16 16" className="size-4"><path d="M0 2h6l2 2h8v11H0z" fill="#f6c33c" /><path d="M0 6h16v9H0z" fill="#fbd65e" /><path d="M3 10h10v5H3z" fill="#2c86c7" /></svg></button>
      <button aria-label="Edge" className="ml-[13px]"><svg viewBox="0 0 16 16" className="size-4"><circle cx="8" cy="8" r="8" fill="#1479c4" /><path d="M0 8C1-2 15-2 16 7c0 4-6 4-6 2 1-4-7-5-10-1z" fill="#3cc8a8" /><path d="M6 9q0 5 8 4-3 3-6 3Q4 13 6 9z" fill="#84d8f5" /></svg></button>
      <button aria-label="Store" className="ml-[13px]"><svg viewBox="0 0 16 16" className="size-4"><path d="M5 4V1h6v3" fill="none" stroke="#2d90cf" strokeWidth="1.500" /><rect y="3.500" width="16" height="12.500" rx="2" fill="#164c77" /><path d="M5 6h3v3H5z" fill="#f05030" /><path d="M8.500 6h3v3h-3z" fill="#7ebf32" /><path d="M5 9.500h3v3H5z" fill="#26a6ea" /><path d="M8.500 9.500h3v3h-3z" fill="#fcc22a" /></svg></button>
      <button aria-label="Outlook" className="ml-[13px]"><svg viewBox="0 0 16 16" className="size-4"><path d="m2 6 9-5 5 4v10H4z" fill="#2e8fe6" /><path d="m4 15 12-9v9z" fill="#63c2f7" /><rect y="8" width="7" height="7" rx="1" fill="#1260b0" /><circle cx="3.500" cy="11.500" r="1.800" fill="none" stroke="#fff" /></svg></button>
      <button aria-label="Chrome" className="ml-2 flex h-[25px] w-[26px] flex-col items-center rounded-[3px] bg-[#e9f0f5] pt-1">
        <svg viewBox="0 0 16 16" className="size-4"><circle cx="8" cy="8" r="8" fill="#dd4234" /><path d="M1 4a8 8 0 0 0 7 12l3.500-6H4.500z" fill="#2d9c4f" /><path d="M15 4H8a4 4 0 0 1 3.500 6L8 16a8 8 0 0 0 7-12z" fill="#f6c32d" /><circle cx="8" cy="8" r="4" fill="#fff" /><circle cx="8" cy="8" r="3" fill="#3b7de8" /></svg>
        <span className="mt-0.5 h-0.5 w-2.5 rounded-full bg-[#1a76c6]" />
      </button>
      <button aria-label="OBS" className="ml-2"><svg viewBox="0 0 18 20" className="h-5 w-[18px]"><circle cx="8" cy="10" r="7" fill="#26262a" /><path d="M8 10q-4-1-3-5M8 10q4-1 5 3M8 10q-1 4-5 3" stroke="#ddd" fill="none" strokeWidth="1.300" /><circle cx="14" cy="4" r="4" fill="#e0101c" /><rect x="6" y="18.500" width="4" height="1.500" rx=".700" fill="#7b858c" /></svg></button>
    </div>
    <div className="flex items-center justify-end pr-[13px]">
      <ChevronUp className="mr-3 size-2.5" />
      <span className="relative mr-2.5"><RefreshCw className="size-3" /><i className="absolute right-0 bottom-0 size-1.5 rounded-full bg-[#ee9a1f]" /></span>
      <span className="relative mr-2.5"><CloudCog className="size-3" /><i className="absolute right-0 bottom-0 size-1.5 rounded-full bg-[#1a80d6]" /></span>
      <Mic className="mr-2.5 size-3 text-[#2b5a94]" />
      <Wifi className="mr-1 size-2.5" />
      <Volume2 className="mr-3 size-3" strokeWidth={1.5} />
      <div className="text-right">6:35 AM<div>4/20/2026</div></div>
    </div>
  </footer>
);

const App = () => (
  <div className="flex min-h-screen flex-col bg-black font-['Roboto_Condensed','Liberation_Sans_Narrow',sans-serif]">
    <BrowserChrome />
    <div className="flex flex-1">
      <Sidebar />
      <main className="flex min-w-0 flex-1 flex-col">
        <TopBar />
        <div className="flex flex-1 gap-1.5 px-[3px]">
          <section className="flex min-w-0 flex-1 flex-col border border-[#232427]">
            <div className="flex h-[21px] items-center border-b border-[#2f3338] bg-linear-to-r from-black from-20% via-[#0c1a24] via-65% to-black to-80%">
              <div className="ml-1.5 flex h-full items-center gap-1.5 border-b border-[#dcae55] text-[9px] font-medium text-[#e6e6e6]">
                Chart<button aria-label="Close chart tab" className="text-[7px] text-[#555]">X</button>
              </div>
              <PanelButtons />
            </div>
            <ChartToolbar />
            <div className="flex flex-1">
              <DrawingTools />
              <div className="flex min-w-0 flex-1 flex-col">
                <Charts />
                <BottomBar />
              </div>
            </div>
          </section>
          <OrderPanel />
        </div>
        <div className="relative mx-[3px] mt-[5px] flex h-3 items-center justify-center border-t border-[#1d1d1f] text-[6px] leading-[10px] text-[#c2c2c2]">
          <span className="absolute left-0">Version: 1.24.3-dev.1</span>
          <span className="pl-12">Licensed to Topstep &amp; powered by TopstepX. Copyright 2024-2026</span>
        </div>
      </main>
    </div>
    <Taskbar />
  </div>
);

export default App;
